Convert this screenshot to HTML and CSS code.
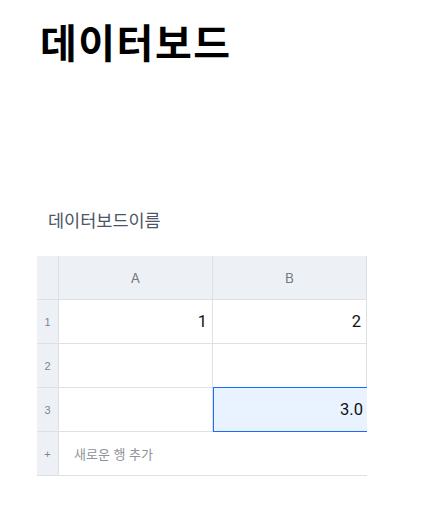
FILE: index.html
```html
<!DOCTYPE html>
<html lang="ko">
  <head>
    <meta charset="UTF-8" />
    <meta name="viewport" content="width=device-width, initial-scale=1.0" />
    <title>데이터보드</title>
    <link rel="stylesheet" href="styles.css">
  </head>
  <body>
    <h1 class="page-title">데이터보드</h1>

    <section class="board">
      <h2 class="board-name">데이터보드이름</h2>

      <div class="sheet">
        <div class="sheet-row head">
          <div class="rownum"></div>
          <div class="cell colname">A</div>
          <div class="cell colname">B</div>
        </div>
        <div class="sheet-row">
          <div class="rownum">1</div>
          <div class="cell num">1</div>
          <div class="cell num">2</div>
        </div>
        <div class="sheet-row">
          <div class="rownum">2</div>
          <div class="cell"></div>
          <div class="cell"></div>
        </div>
        <div class="sheet-row">
          <div class="rownum">3</div>
          <div class="cell"></div>
          <div class="cell num selected">3.0</div>
        </div>
        <div class="sheet-row add">
          <div class="rownum">+</div>
          <div class="add-label">새로운 행 추가</div>
        </div>
      </div>
    </section>
  </body>
</html>
```

FILE: styles.css
```css
body {
  margin: 0;
  font-family: "Noto Sans CJK KR", "Noto Sans", sans-serif;
  background-color: #fff;
  color: #111;
}

.page-title {
  margin: 17px 0 0 40px;
  font-size: 40px;
  font-weight: 600;
  line-height: 48px;
  letter-spacing: 1.5px;
  color: #000;
}

.board {
  margin-top: 143px;
}

.board-name {
  margin: 0 0 24px 48px;
  font-size: 17.5px;
  font-weight: 400;
  line-height: 24px;
  color: #4b5563;
}

.sheet {
  margin-left: 37px;
  width: 330px;
  overflow: hidden;
}

.sheet-row {
  display: flex;
  height: 44px;
  border-bottom: 1px solid #dde1e6;
  box-sizing: border-box;
}

.sheet-row.head {
  background-color: #edf1f5;
}

.rownum {
  flex: 0 0 21px;
  display: flex;
  align-items: center;
  justify-content: center;
  background-color: #edf1f5;
  border-right: 1px solid #dde1e6;
  font-family: "Liberation Sans", Arial, sans-serif;
  font-size: 11px;
  color: #7b8490;
}

.cell {
  flex: 0 0 154px;
  display: flex;
  align-items: center;
  box-sizing: border-box;
  border-right: 1px solid #dde1e6;
  padding: 0 5px;
  font-family: Roboto, "Liberation Sans", sans-serif;
  font-size: 16.5px;
  color: #111;
}

.colname {
  justify-content: center;
  font-family: Inter, "Liberation Sans", sans-serif;
  font-size: 13.5px;
  color: #737b86;
}

.num {
  justify-content: flex-end;
}

.cell.selected {
  flex-basis: 155px;
  margin-top: -1px;
  height: 45px;
  border-right: none;
  box-shadow: inset 0 0 0 1px #1a6bff;
  background-color: #e8f3ff;
}

.add-label {
  display: flex;
  align-items: center;
  padding-left: 15px;
  font-size: 13px;
  color: #8f949a;
}
```
